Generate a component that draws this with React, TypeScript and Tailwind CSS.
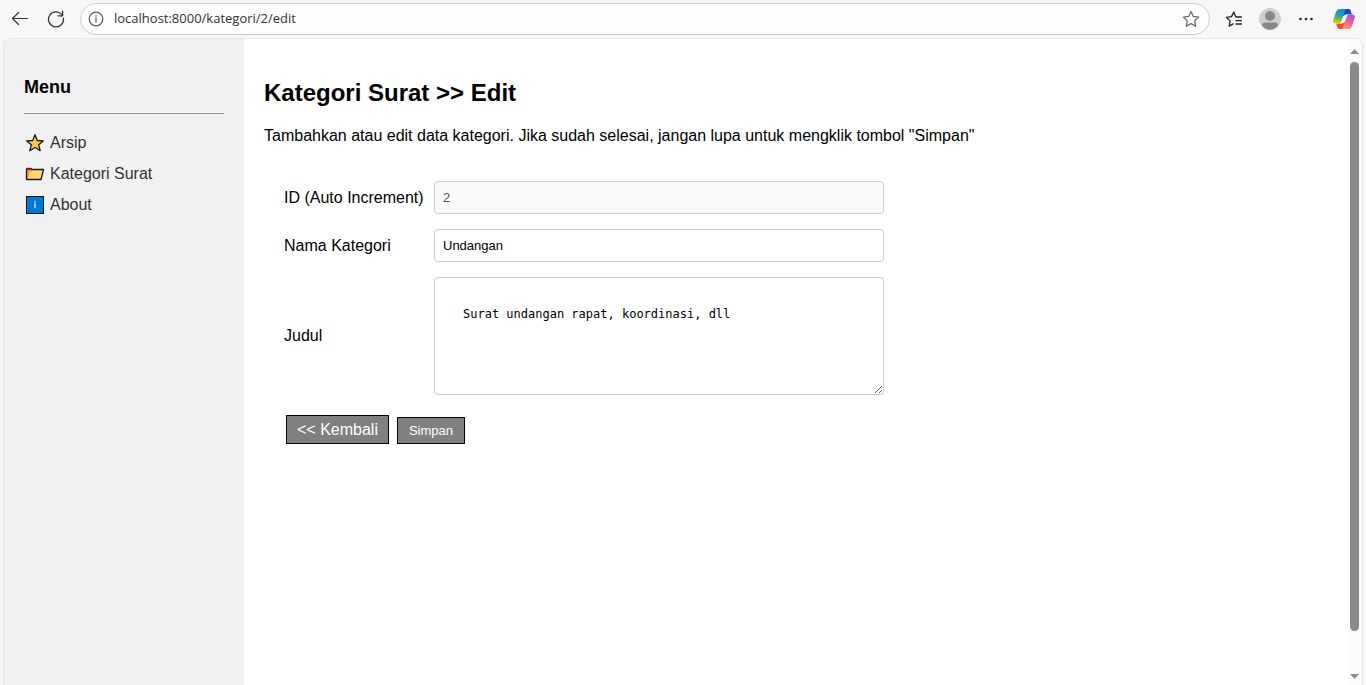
import type { ReactNode } from "react";

function BackIcon() {
  return (
    <svg width="18" height="18" viewBox="0 0 18 18" fill="none" stroke="#333" strokeWidth="1.2" aria-hidden="true">
      <path d="M16.500 8.500H1.600M7.600 2.500L1.500 8.500l6.100 6" strokeLinecap="round" strokeLinejoin="round" />
    </svg>
  );
}

function ReloadIcon() {
  return (
    <svg width="18" height="18" viewBox="0 0 18 18" fill="none" stroke="#333" strokeWidth="1.3" aria-hidden="true">
      <path d="M16.400 8.200A7.500 7.500 0 1 1 14.600 4.400M15.600 1.200v4.600h-4.600" strokeLinecap="round" strokeLinejoin="round" />
    </svg>
  );
}

function InfoIcon() {
  return (
    <svg width="16" height="16" viewBox="0 0 16 16" fill="none" stroke="#555" aria-hidden="true">
      <circle cx="8" cy="8" r="6.800" strokeWidth="1.2" />
      <path d="M8 7.200v4" strokeWidth="1.2" strokeLinecap="round" />
      <circle cx="8" cy="5" r="0.800" fill="#555" stroke="none" />
    </svg>
  );
}

function StarIcon() {
  return (
    <svg width="18" height="18" viewBox="0 0 18 18" fill="none" stroke="#666" strokeWidth="1.2" strokeLinejoin="round" aria-hidden="true">
      <path d="M9 1.500l2.300 4.900 5.300.7-3.900 3.700 1 5.400L9 13.600l-4.700 2.600 1-5.400L1.400 7.100l5.300-.7z" />
    </svg>
  );
}

function FavoritesIcon() {
  return (
    <svg width="18" height="18" viewBox="0 0 18 18" fill="none" stroke="#222" strokeWidth="1.3" strokeLinecap="round" strokeLinejoin="round" aria-hidden="true">
      <path d="M16.400 7H10.900L8.800 2 6.500 6.600l-5.100.7 3.700 3.600-.9 5.200 3.900-2.200M11 10.600h5.400M11 14h5.400" />
    </svg>
  );
}

function ProfileIcon() {
  return (
    <svg width="22" height="22" viewBox="0 0 22 22" aria-hidden="true">
      <circle cx="11" cy="11" r="11" fill="#d2d0ce" />
      <circle cx="11" cy="8" r="5" fill="#8a8886" />
      <path d="M3 17.600c0-2 1.300-3 3-3h10c1.700 0 3 1 3 3-1.900 2.700-4.700 4.200-8 4.200s-6.100-1.500-8-4.200z" fill="#8a8886" />
    </svg>
  );
}

function MoreIcon() {
  return (
    <svg width="16" height="16" viewBox="0 0 16 16" fill="#222" aria-hidden="true">
      <circle cx="2.500" cy="8" r="1.300" />
      <circle cx="8" cy="8" r="1.300" />
      <circle cx="13.500" cy="8" r="1.300" />
    </svg>
  );
}

function CopilotIcon() {
  return (
    <svg width="24" height="22" viewBox="0 0 24 22" aria-hidden="true">
      <defs>
        <linearGradient id="cpLeft" x1="0.600" y1="0" x2="0.400" y2="1">
          <stop offset="0" stopColor="#1490df" />
          <stop offset="0.400" stopColor="#1c9bb8" />
          <stop offset="0.700" stopColor="#79b83c" />
          <stop offset="1" stopColor="#f5cf12" />
        </linearGradient>
        <linearGradient id="cpRight" x1="0.700" y1="0" x2="0.300" y2="1">
          <stop offset="0" stopColor="#a852e8" />
          <stop offset="0.500" stopColor="#ec5f9b" />
          <stop offset="1" stopColor="#ff9a58" />
        </linearGradient>
      </defs>
      <path d="M12.500 1h4c1.400 0 2 .8 2.400 2.200l1 3.300h-3.500c-1.800 0-2.600.4-3.400 1.500h-3z" fill="#1746c8" />
      <path d="M11.500 21h-4c-1.400 0-2-.8-2.400-2.200l-1-3.300h3.500c1.800 0 2.600-.4 3.400-1.500h3z" fill="#ef4b36" />
      <path d="M15.200 1H7.600C5.400 1 4.400 2.800 3.500 5.500L1.300 12c-.8 2.200.3 3.600 2.400 3.600h3c1.400 0 2.100-.9 2.600-2.300L12.800 3.300C13.300 1.700 14 1 15.200 1z" fill="url(#cpLeft)" />
      <path d="M8.800 21h7.600c2.200 0 3.200-1.800 4.100-4.500L22.700 10c.8-2.200-.3-3.600-2.400-3.600h-3c-1.400 0-2.100.9-2.600 2.300l-3.500 10C10.700 20.300 10 21 8.800 21z" fill="url(#cpRight)" />
      <path d="M16.500 6.500h-1.700c-1.900 0-3 .8-3.500 2.200l-1.600 4.600c-.5 1.300-1.200 2-2.200 2.200h2c1.700 0 2.800-.8 3.300-2.200l1.700-4.900c.4-1.100 1-1.700 2-1.900z" fill="#fff" />
    </svg>
  );
}

function ArsipIcon() {
  return (
    <svg width="20" height="20" viewBox="0 0 20 20" aria-hidden="true">
      <path d="M10 1.800l2.300 5.700 6 .4-4.600 3.900 1.500 5.900L10 14.500l-5.200 3.200 1.500-5.900-4.600-3.900 6-.4z" fill="#ffc83d" stroke="#1a1a1a" strokeWidth="1.300" strokeLinejoin="round" />
    </svg>
  );
}

function FolderIcon() {
  return (
    <svg width="20" height="20" viewBox="0 0 20 20" strokeLinejoin="round" aria-hidden="true">
      <path d="M1.500 15.500V4.500h4l1 1h9v10z" fill="#f5a623" />
      <path d="M2 4h4v2H2z" fill="#e81123" />
      <path d="M3 15.500L4.500 8l2-.5 1-1.500h10.800L16 15.500z" fill="#ffd679" />
      <path d="M1.500 15.500V4.500M6 4.500l1 1h11.500L16 15.500H1.500" fill="none" stroke="#1a1a1a" strokeWidth="1.300" />
      <path d="M1.500 4.300h4.500" stroke="#5a1018" strokeWidth="1" />
    </svg>
  );
}

function AboutIcon() {
  return (
    <svg width="20" height="20" viewBox="0 0 20 20" aria-hidden="true">
      <rect x="1.500" y="1.500" width="17" height="17" fill="#0078d7" stroke="#111" />
      <path d="M9.300 6h1.400v1.400H9.300zM9.300 8.300h1.400v5H9.300z" fill="#cfe6fa" />
    </svg>
  );
}

function MenuLink({ icon, children }: { icon: ReactNode; children: ReactNode }) {
  return (
    <li>
      <a href="#" className="flex items-center gap-[5px] pl-px text-base leading-[18px] text-[#333]">
        {icon}
        <span>{children}</span>
      </a>
    </li>
  );
}

function Toolbar() {
  return (
    <header className="flex h-[38px] items-center pr-[10px] pl-[11px]">
      <button type="button" aria-label="Back" className="flex w-[18px] justify-center"><BackIcon /></button>
      <button type="button" aria-label="Refresh" className="ml-[18px] flex w-[18px] justify-center"><ReloadIcon /></button>
      <div className="ml-[15px] flex h-8 flex-1 items-center gap-[10px] rounded-full border border-[#cdcdcd] bg-[#fdfdfd] pr-[9px] pl-[7px]">
        <InfoIcon />
        <input
          aria-label="Address"
          defaultValue="localhost:8000/kategori/2/edit"
          className="min-w-0 flex-1 bg-transparent font-['Open_Sans','Noto_Sans',sans-serif] text-[13px] text-[#333] outline-none"
        />
        <button type="button" aria-label="Add to favorites"><StarIcon /></button>
      </div>
      <div className="ml-[15px] flex items-center">
        <button type="button" aria-label="Favorites"><FavoritesIcon /></button>
        <button type="button" aria-label="Profile" className="ml-4"><ProfileIcon /></button>
        <button type="button" aria-label="More" className="ml-[17px]"><MoreIcon /></button>
        <button type="button" aria-label="Copilot" className="ml-[18px]"><CopilotIcon /></button>
      </div>
    </header>
  );
}

function Scrollbar() {
  return (
    <div className="flex w-[15px] flex-col items-center bg-[#fcfcfc] pt-[10px] pb-[6px]" aria-hidden="true">
      <svg width="9" height="5" viewBox="0 0 9 5"><path d="M4.500 0L9 5H0z" fill="#8b8b8b" /></svg>
      <div className="mt-2 w-[9px] grow-[568] rounded-full bg-[#8b8b8b]" />
      <div className="grow-[43]" />
      <svg width="9" height="5" viewBox="0 0 9 5"><path d="M4.500 5L9 0H0z" fill="#8b8b8b" /></svg>
    </div>
  );
}

export default function App() {
  return (
    <div className="flex min-h-screen flex-col bg-[#f7f7f7] font-['Liberation_Sans',Arial,sans-serif] text-black">
      <Toolbar />
      <div className="mr-[3px] ml-[3px] flex flex-1 overflow-hidden rounded-t-lg border border-b-0 border-[#e6e6e6] bg-white">
        <aside className="w-60 shrink-0 bg-[#f1f1f1] px-5 pt-[38px]">
          <h3 className="text-lg leading-[21px] font-bold">Menu</h3>
          <hr className="mt-[15px] border-[#999]" />
          <ul className="mt-[19px] flex flex-col gap-[11px]">
            <MenuLink icon={<ArsipIcon />}>Arsip</MenuLink>
            <MenuLink icon={<FolderIcon />}>Kategori Surat</MenuLink>
            <MenuLink icon={<AboutIcon />}>About</MenuLink>
          </ul>
        </aside>
        <main className="min-w-0 flex-1 px-5 pt-10">
          <h2 className="text-2xl leading-7 font-bold">Kategori Surat &gt;&gt; Edit</h2>
          <p className="mt-5 text-base leading-[18px]">
            Tambahkan atau edit data kategori. Jika sudah selesai, jangan lupa untuk mengklik tombol "Simpan"
          </p>
          <form className="p-5 pt-9" onSubmit={(e) => e.preventDefault()}>
            <div className="grid max-w-[600px] grid-cols-[150px_1fr] items-center gap-y-[15px] text-base leading-[18px]">
              <label htmlFor="id">ID (Auto Increment)</label>
              <input id="id" defaultValue="2" disabled className="h-[33px] w-full rounded-[4px] border border-[#ccc] bg-[#fafafa] px-2 text-[13px] text-[#545454]" />
              <label htmlFor="nama">Nama Kategori</label>
              <input id="nama" defaultValue="Undangan" className="h-[33px] w-full rounded-[4px] border border-[#ccc] bg-white px-2 text-[13px]" />
              <label htmlFor="judul">Judul</label>
              <textarea
                id="judul"
                rows={5}
                defaultValue="Surat undangan rapat, koordinasi, dll"
                className="block h-[118px] w-full resize rounded-[4px] border border-[#ccc] bg-white px-7 pt-7 font-['DejaVu_Sans_Mono',monospace] text-[12px] leading-4"
              />
            </div>
            <div className="mt-5 ml-[2px] flex items-end gap-2">
              <a href="#" className="border border-black bg-[#808080] px-[10px] py-[5px] text-base leading-[17px] text-white">&lt;&lt; Kembali</a>
              <button type="submit" className="border border-black bg-[#808080] px-[11px] py-[5px] text-[13px] leading-[15px] text-white">Simpan</button>
            </div>
          </form>
        </main>
        <Scrollbar />
      </div>
    </div>
  );
}
